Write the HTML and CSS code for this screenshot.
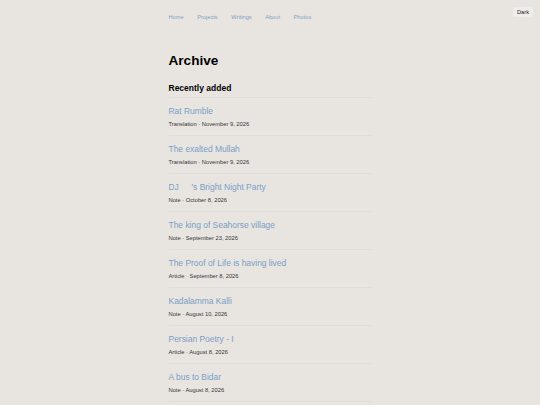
FILE: index.html
```html
<!DOCTYPE html>
<html lang="en">
<head>
<meta charset="utf-8">
<title>Archive</title>
<link rel="stylesheet" href="styles.css">
</head>
<body>
<button class="theme-toggle" type="button">Dark</button>
<div class="page">
  <nav class="nav">
    <a href="#">Home</a>
    <a href="#">Projects</a>
    <a href="#">Writings</a>
    <a href="#">About</a>
    <a href="#">Photos</a>
  </nav>
  <h1 class="title">Archive</h1>
  <h2 class="subtitle">Recently added</h2>
  <ul class="list">
    <li class="item"><a class="item-title" href="#">Rat Rumble</a><div class="meta">Translation · November 9, 2026</div></li>
    <li class="item"><a class="item-title" href="#">The exalted Mullah</a><div class="meta">Translation · November 9, 2026</div></li>
    <li class="item"><a class="item-title" href="#">DJ<span class="gap"></span>'s Bright Night Party</a><div class="meta">Note · October 8, 2026</div></li>
    <li class="item"><a class="item-title" href="#">The king of Seahorse village</a><div class="meta">Note · September 23, 2026</div></li>
    <li class="item"><a class="item-title" href="#">The Proof of Life is having lived</a><div class="meta">Article · September 8, 2026</div></li>
    <li class="item"><a class="item-title" href="#">Kadalamma Kalli</a><div class="meta">Note · August 10, 2026</div></li>
    <li class="item"><a class="item-title" href="#">Persian Poetry - I</a><div class="meta">Article · August 8, 2026</div></li>
    <li class="item"><a class="item-title" href="#">A bus to Bidar</a><div class="meta">Note · August 8, 2026</div></li>
  </ul>
</div>
</body>
</html>
```

FILE: styles.css
```css
html, body {
  margin: 0;
  padding: 0;
  background: #e8e5e1;
  font-family: "Liberation Sans", Arial, sans-serif;
  color: #000;
}

.theme-toggle {
  position: absolute;
  top: 7px;
  right: 7px;
  margin: 0;
  padding: 2px 4px;
  border: none;
  border-radius: 1px;
  background: #efedea;
  color: #222;
  font-family: "Liberation Sans", Arial, sans-serif;
  font-size: 5.7px;
  line-height: 6px;
}

.page {
  width: 203px;
  margin: 0 auto;
  padding-top: 12px;
}

.nav {
  display: flex;
  gap: 13.5px;
  font-size: 5.7px;
  line-height: 10px;
}

.nav a {
  color: #7fa2c7;
  text-decoration: none;
}

.title {
  margin: 31.3px 0 0;
  font-size: 13.6px;
  line-height: 16px;
  font-weight: bold;
}

.subtitle {
  margin: 14.2px 0 0;
  font-size: 8.5px;
  line-height: 10px;
  font-weight: bold;
}

.list {
  list-style: none;
  margin: 3.5px 0 0;
  padding: 0;
  border-top: 1px solid #e1ddd9;
}

.item {
  padding: 8px 0 7px;
  border-bottom: 1px solid #e1ddd9;
}

.item-title {
  display: block;
  color: #7a9ec6;
  text-decoration: none;
  font-size: 8.45px;
  line-height: 11px;
}

.gap {
  display: inline-block;
  width: 12.7px;
}

.meta {
  margin-top: 3px;
  font-size: 5.75px;
  line-height: 8px;
  color: #333;
}
```
